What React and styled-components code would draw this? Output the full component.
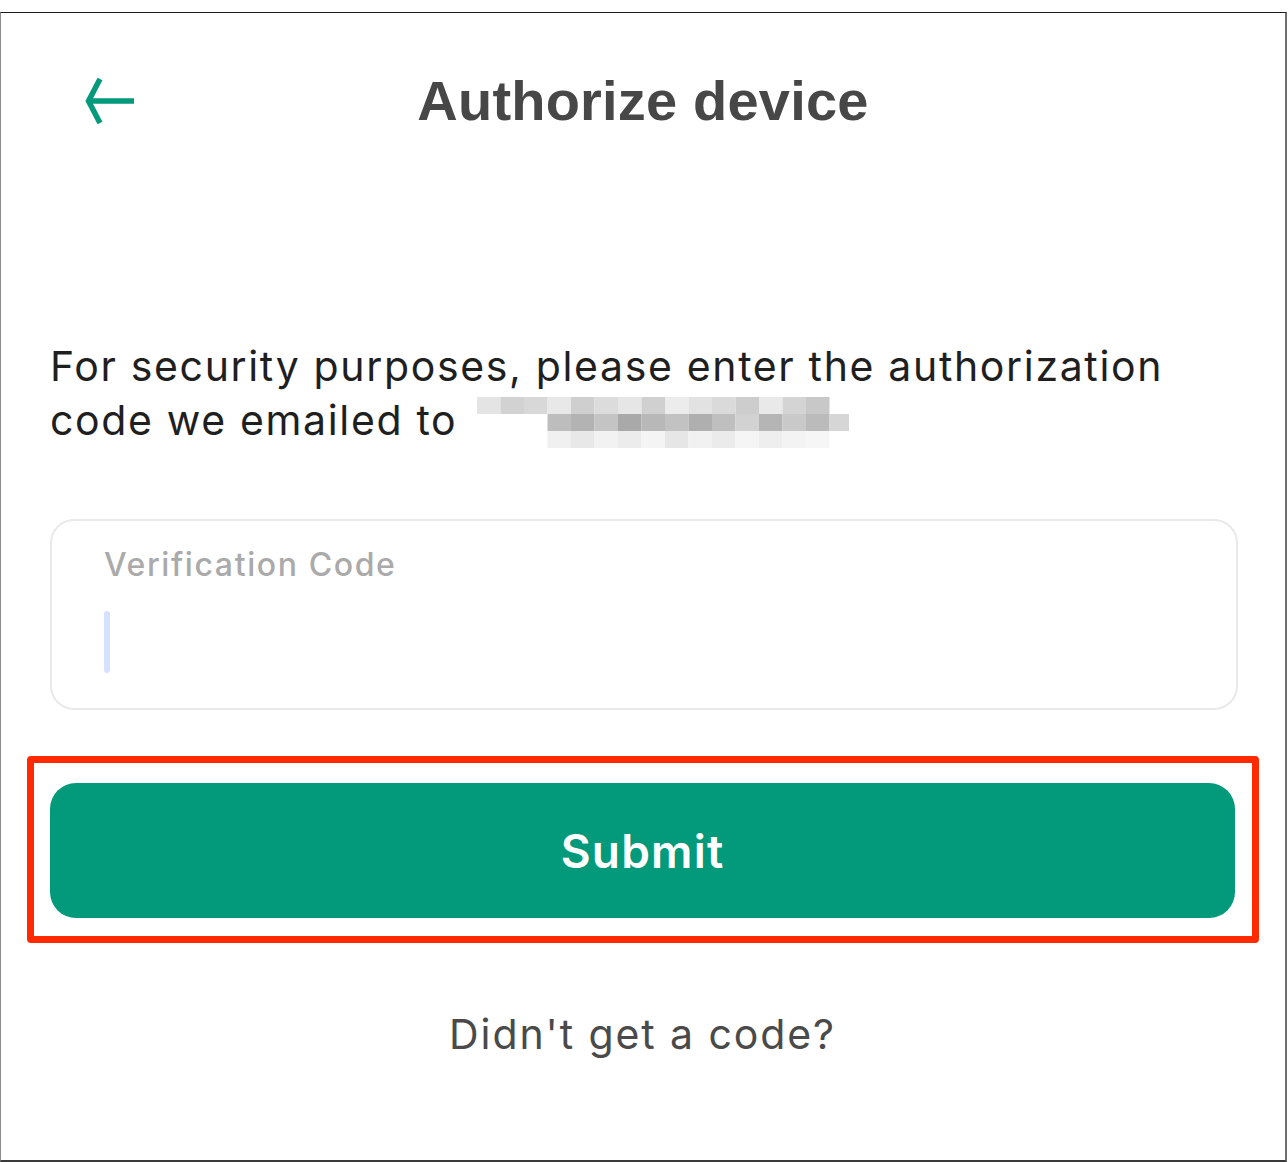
import React from 'react'
import styled, { createGlobalStyle } from 'styled-components'

const GlobalStyle = createGlobalStyle`
  body {
    margin: 0;
    background: #ffffff;
    font-family: Inter, "Noto Sans", sans-serif;
  }
`

const Frame = styled.div`
  box-sizing: border-box;
  margin-top: 12px;
  width: 1287px;
  height: 1150px;
  border-top: 1px solid #1c1c1c;
  border-left: 1px solid #8c8c8c;
  border-right: 2px solid #6e6e6e;
  border-bottom: 2px solid #3a3a3a;
  background: #ffffff;
`

const Header = styled.header`
  display: grid;
  grid-template-columns: 1fr auto 1fr;
  align-items: center;
  height: 174px;
`

const BackButton = styled.button`
  justify-self: start;
  display: flex;
  align-items: center;
  margin-left: 84px;
  padding: 0;
  border: 0;
  background: none;
  cursor: pointer;
`

const Title = styled.h1`
  margin: 0;
  font-family: "Liberation Sans", Arial, sans-serif;
  font-size: 56px;
  font-weight: 700;
  color: #474747;
  letter-spacing: 0.2px;
`

const Content = styled.main`
  padding: 0 50px 0 49px;
`

const Intro = styled.p`
  margin: 152px 0 0;
  font-size: 41px;
  line-height: 54px;
  color: #1f1f1f;
  letter-spacing: 1.65px;
`

const Redacted = styled.svg`
  display: inline-block;
  vertical-align: -14px;
  margin-left: 20px;
`

const Field = styled.label`
  box-sizing: border-box;
  display: flex;
  flex-direction: column;
  margin-top: 70px;
  width: 1188px;
  height: 191px;
  padding: 24px 54px 0 52px;
  border: 2px solid #e9e9e9;
  border-radius: 24px;
`

const FieldLabel = styled.span`
  font-size: 32px;
  line-height: 40px;
  font-weight: 500;
  color: #aaaaaa;
  letter-spacing: 1.6px;
`

const Caret = styled.span`
  display: block;
  margin-top: 26px;
  width: 6px;
  height: 62px;
  border-radius: 3px;
  background: #d6e1ff;
`

const Highlight = styled.div`
  margin: 46px -24px 0 -23px;
  padding: 20px 17px 18px 16px;
  border: 7px solid #ff2a00;
  border-radius: 4px;
`

const SubmitButton = styled.button`
  display: block;
  width: 100%;
  height: 135px;
  border: 0;
  border-radius: 26px;
  background: #03997b;
  color: #ffffff;
  font-family: Inter, "Noto Sans", sans-serif;
  font-size: 46px;
  font-weight: 600;
  letter-spacing: 1.2px;
  cursor: pointer;
`

const ResendLink = styled.a`
  display: block;
  margin-top: 64px;
  text-align: center;
  font-size: 41px;
  line-height: 54px;
  color: #4a4a4a;
  letter-spacing: 1.9px;
  text-decoration: none;
  cursor: pointer;
`

const blocks = [
  [0, 0, '#e4e4e4'], [1, 0, '#d2d2d2'], [2, 0, '#d8d8d8'], [3, 0, '#e8e8e8'], [4, 0, '#cfcfcf'],
  [5, 0, '#dcdcdc'], [6, 0, '#e6e6e6'], [7, 0, '#d0d0d0'], [8, 0, '#ececec'], [9, 0, '#e2e2e2'],
  [10, 0, '#dadada'], [11, 0, '#cdcdcd'], [12, 0, '#e9e9e9'], [13, 0, '#d4d4d4'], [14, 0, '#c8c8c8'],
  [3, 1, '#bdbdbd'], [4, 1, '#b3b3b3'], [5, 1, '#c4c4c4'], [6, 1, '#a9a9a9'], [7, 1, '#b8b8b8'],
  [8, 1, '#c2c2c2'], [9, 1, '#afafaf'], [10, 1, '#bfbfbf'], [11, 1, '#d2d2d2'], [12, 1, '#b5b5b5'],
  [13, 1, '#c9c9c9'], [14, 1, '#bbbbbb'], [15, 1, '#d6d6d6'],
  [3, 2, '#f0f0f0'], [4, 2, '#e8e8e8'], [5, 2, '#f2f2f2'], [6, 2, '#ececec'], [7, 2, '#f4f4f4'],
  [8, 2, '#e6e6e6'], [9, 2, '#f1f1f1'], [10, 2, '#ebebeb'], [11, 2, '#f5f5f5'], [12, 2, '#eeeeee'],
  [13, 2, '#f3f3f3'], [14, 2, '#f6f6f6'],
]

const BackArrow = () => (
  <svg width="50" height="50" viewBox="0 0 50 50" fill="none">
    <path d="M15 4 L3.5 26 L15 48" stroke="#03997b" strokeWidth="5.5" strokeLinejoin="miter" />
    <path d="M4 26 H49" stroke="#03997b" strokeWidth="5.5" />
  </svg>
)

const App = () => (
  <>
    <GlobalStyle />
    <Frame>
      <Header>
        <BackButton aria-label="Back">
          <BackArrow />
        </BackButton>
        <Title>Authorize device</Title>
      </Header>
      <Content>
        <Intro>
          For security purposes, please enter the authorization
          <br />
          code we emailed to
          <Redacted width="372" height="52" viewBox="0 0 372 52" aria-hidden="true">
            {blocks.map(([x, y, c], i) => (
              <rect key={i} x={x * 23.5} y={y * 17} width="23.5" height="17" fill={c} />
            ))}
          </Redacted>
        </Intro>
        <Field>
          <FieldLabel>Verification Code</FieldLabel>
          <Caret />
        </Field>
        <Highlight>
          <SubmitButton>Submit</SubmitButton>
        </Highlight>
        <ResendLink>Didn't get a code?</ResendLink>
      </Content>
    </Frame>
  </>
)

export default App
